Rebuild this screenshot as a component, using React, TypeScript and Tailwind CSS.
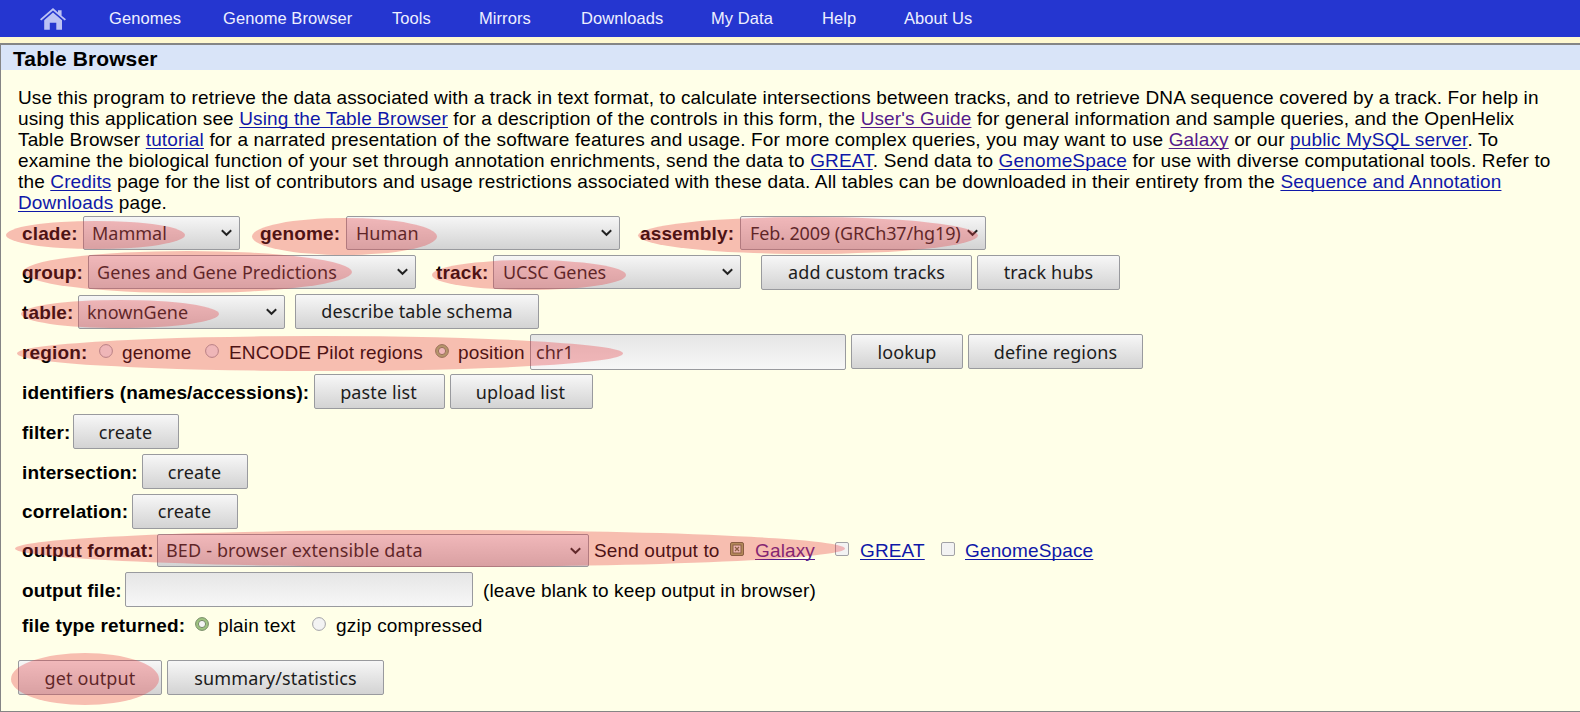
import React from 'react';

const navItems = [
  { label: 'Genomes', width: 'w-[114px]' },
  { label: 'Genome Browser', width: 'w-[169px]' },
  { label: 'Tools', width: 'w-[87px]' },
  { label: 'Mirrors', width: 'w-[102px]' },
  { label: 'Downloads', width: 'w-[130px]' },
  { label: 'My Data', width: 'w-[111px]' },
  { label: 'Help', width: 'w-[82px]' },
  { label: 'About Us', width: 'w-[90px]' }
];

const highlights = [
  'left-[6px] top-[221px] w-[179px] h-[28px]',
  'left-[252px] top-[218px] w-[185px] h-[37px]',
  'left-[638px] top-[217px] w-[340px] h-[37px]',
  'left-[23px] top-[251px] w-[329px] h-[42px]',
  'left-[432px] top-[260px] w-[194px] h-[30px]',
  'left-[21px] top-[300px] w-[198px] h-[28px]',
  'left-[17px] top-[336px] w-[606px] h-[35px]',
  'left-[15px] top-[530px] w-[830px] h-[37px]',
  'left-[11px] top-[653px] w-[148px] h-[52px]'
];

const Row: React.FC<{ className: string; children: React.ReactNode }> = ({ className, children }) => (
  <div className={`flex items-start pl-1 ${className}`}>{children}</div>
);

const Label: React.FC<{ width: string; children: React.ReactNode }> = ({ width, children }) => (
  <span className={`shrink-0 font-bold ${width}`}>{children}</span>
);

const Text: React.FC<{ width: string; children: React.ReactNode }> = ({ width, children }) => (
  <span className={`shrink-0 ${width}`}>{children}</span>
);

const Link: React.FC<{ visited?: boolean; children: React.ReactNode }> = ({ visited, children }) => (
  <a
    href="#"
    className={`underline decoration-1 underline-offset-2 [text-decoration-skip-ink:none] ${visited ? 'text-[#551a8b]' : 'text-[#0f18a8]'}`}
  >
    {children}
  </a>
);

const Select: React.FC<{ className: string; children: React.ReactNode }> = ({ className, children }) => (
  <button
    className={`flex shrink-0 items-center justify-between rounded-[2px] border border-[#999a9e] bg-gradient-to-b from-[#f6f6f6] to-[#d3d3d3] pl-[8px] pr-[7px] text-left font-['Noto_Sans'] text-[18px] text-[#1c1c1c] ${className}`}
  >
    <span>{children}</span>
    <svg className="shrink-0" width="11" height="8" viewBox="0 0 11 8" fill="none" stroke="#222" strokeWidth="1.9">
      <path d="M0.8 1.2 L5.5 5.8 L10.2 1.2" />
    </svg>
  </button>
);

const Button: React.FC<{ className: string; children: React.ReactNode }> = ({ className, children }) => (
  <button
    className={`flex h-[35px] shrink-0 items-center justify-center rounded-[2px] border border-[#999a9e] bg-gradient-to-b from-[#f7f7f7] to-[#d3d3d3] font-['Noto_Sans'] text-[18px] leading-[35px] tracking-[0.12px] text-[#1c1c1c] ${className}`}
  >
    {children}
  </button>
);

const Radio: React.FC<{ className: string; checked?: boolean }> = ({ className, checked }) => (
  <svg className={`shrink-0 ${className}`} width="14" height="14" viewBox="0 0 14 14">
    <circle cx="7" cy="7" r="6.4" fill={checked ? '#9fc480' : '#f3f3f3'} stroke={checked ? '#768a68' : '#a2a2a6'} />
    {checked && <circle cx="7" cy="7" r="3.6" fill="#f4f4f4" stroke="#768a68" />}
  </svg>
);

const Checkbox: React.FC<{ className: string; checked?: boolean }> = ({ className, checked }) => (
  <svg className={`shrink-0 ${className}`} width="14" height="14" viewBox="0 0 14 14">
    <rect x="0.5" y="0.5" width="13" height="13" rx="1.5" fill={checked ? '#9bb067' : '#f3f3f3'} stroke={checked ? '#5f6f45' : '#a2a2a6'} />
    {checked && (
      <>
        <rect x="3" y="3" width="8" height="8" fill="#f0f0e8" stroke="#5f6f45" />
        <path d="M5 5 L9 9 M9 5 L5 9" stroke="#5f6f45" strokeWidth="1.3" />
      </>
    )}
  </svg>
);

const App: React.FC = () => {
  return (
    <div className="relative flex h-[712px] w-[1580px] flex-col overflow-hidden whitespace-nowrap bg-[#fff8d0] font-['Liberation_Sans',sans-serif] text-[19px] text-black">
      <nav className="flex h-[37px] shrink-0 items-center bg-[#2536d0] pl-[40px] text-[16.5px] tracking-[0.07px] text-[#eef0ff]">
        <svg className="mr-[43px]" width="26" height="22" viewBox="0 0 26 22" fill="#bcc2f4">
          <path d="M13 0 L18 4.5 V2.2 H21.6 V7.7 L26 11.2 L24.7 12.4 L13 2.4 L1.3 12.4 L0 11.2 Z" />
          <path d="M13 4.5 L22 12.2 V21.7 H16.3 V14.7 H9.8 V21.7 H4.2 V12.2 Z" />
        </svg>
        {navItems.map((item) => (
          <a key={item.label} href="#" className={`shrink-0 ${item.width}`}>
            {item.label}
          </a>
        ))}
      </nav>

      <main className="mt-[6px] h-[669px] border-b border-l border-t-2 border-[#858585] bg-[#ffffe8] tracking-[0.14px]">
        <h1 className="h-[25px] bg-[#d9e4f8] pl-3 text-[21px] font-bold leading-[27px] tracking-[0.1px]">Table Browser</h1>

        <div className="pl-[17px] pt-[17px]">
          <div className="leading-[21px] tracking-[0.147px]">
            <p className="tracking-[0.128px]">Use this program to retrieve the data associated with a track in text format, to calculate intersections between tracks, and to retrieve DNA sequence covered by a track. For help in</p>
            <p className="tracking-[0.135px]">using this application see <Link>Using the Table Browser</Link> for a description of the controls in this form, the <Link visited>User's Guide</Link> for general information and sample queries, and the OpenHelix</p>
            <p>Table Browser <Link>tutorial</Link> for a narrated presentation of the software features and usage. For more complex queries, you may want to use <Link visited>Galaxy</Link> or our <Link>public MySQL server</Link>. To</p>
            <p>examine the biological function of your set through annotation enrichments, send the data to <Link>GREAT</Link>. Send data to <Link>GenomeSpace</Link> for use with diverse computational tools. Refer to</p>
            <p>the <Link>Credits</Link> page for the list of contributors and usage restrictions associated with these data. All tables can be downloaded in their entirety from the <Link>Sequence and Annotation</Link></p>
            <p><Link>Downloads</Link> page.</p>
          </div>

          <Row className="mt-[3px] h-[39px] leading-[35px]">
            <Label width="w-[61px]">clade:</Label>
            <Select className="mr-[20px] h-[34px] w-[157px] tracking-normal">Mammal</Select>
            <Label width="w-[86px]">genome:</Label>
            <Select className="mr-[20px] h-[34px] w-[274px] pl-[9px] tracking-normal">Human</Select>
            <Label width="w-[100px]">assembly:</Label>
            <Select className="h-[34px] w-[246px] pl-[9px] tracking-[-0.13px]">Feb. 2009 (GRCh37/hg19)</Select>
          </Row>

          <Row className="h-[39px] leading-[35px]">
            <Label width="w-[66px]">group:</Label>
            <Select className="mr-[20px] h-[34px] w-[328px] tracking-[0.06px]">Genes and Gene Predictions</Select>
            <Label width="w-[57px]">track:</Label>
            <Select className="mr-[20px] h-[34px] w-[248px] pl-[9px] tracking-[-0.05px]">UCSC Genes</Select>
            <Button className="mr-[5px] w-[211px]">add custom tracks</Button>
            <Button className="w-[143px]">track hubs</Button>
          </Row>

          <Row className="h-[40px] leading-[37px]">
            <Label width="w-[56px]">table:</Label>
            <Select className="mr-[10px] mt-px h-[34px] w-[207px] tracking-normal">knownGene</Select>
            <Button className="w-[244px]">describe table schema</Button>
          </Row>

          <Row className="h-[40px] leading-[37px]">
            <Label width="w-[77px]">region:</Label>
            <Radio className="mr-[9px] mt-[10px]" />
            <Text width="w-[83px]">genome</Text>
            <Radio className="mr-[10px] mt-[10px]" />
            <Text width="w-[206px]">ENCODE Pilot regions</Text>
            <Radio className="mr-[9px] mt-[10px]" checked />
            <Text width="w-[72px]">position</Text>
            <div className="mr-[5px] flex h-[36px] w-[316px] items-center rounded-[2px] border border-[#999a9e] bg-gradient-to-b from-[#e6e6e6] to-[#f7f7f7] pl-[5px] font-['Noto_Sans'] text-[18px] tracking-normal text-[#1c1c1c]">
              chr1
            </div>
            <Button className="mr-[5px] w-[112px] pt-0.5">lookup</Button>
            <Button className="w-[175px] pt-0.5">define regions</Button>
          </Row>

          <Row className="h-[40px] leading-[37px]">
            <Label width="w-[292px]">identifiers (names/accessions):</Label>
            <Button className="mr-[5px] w-[131px] pr-[2px] pt-0.5">paste list</Button>
            <Button className="w-[143px] pr-[2px] pt-0.5">upload list</Button>
          </Row>

          <Row className="h-[40px] leading-[37px]">
            <Label width="w-[51px]">filter:</Label>
            <Button className="w-[106px] pr-px pt-0.5">create</Button>
          </Row>

          <Row className="h-[40px] leading-[37px]">
            <Label width="w-[120px]">intersection:</Label>
            <Button className="w-[106px] pr-px pt-0.5">create</Button>
          </Row>

          <Row className="h-[40px] leading-[35px]">
            <Label width="w-[110px]">correlation:</Label>
            <Button className="w-[106px] pr-px">create</Button>
          </Row>

          <Row className="h-[38px] leading-[33px]">
            <Label width="w-[135px]">output format:</Label>
            <Select className="mr-[5px] h-[33px] w-[432px] tracking-[0.15px]">BED - browser extensible data</Select>
            <Text width="w-[136px]">Send output to</Text>
            <Checkbox className="mr-[11px] mt-[8px]" checked />
            <Text width="w-[80px]"><Link visited>Galaxy</Link></Text>
            <Checkbox className="mr-[11px] mt-[8px]" />
            <Text width="w-[81px]"><Link>GREAT</Link></Text>
            <Checkbox className="mr-[10px] mt-[8px]" />
            <Text width="w-[134px]"><Link>GenomeSpace</Link></Text>
          </Row>

          <Row className="h-[37px] leading-[37px]">
            <Label width="w-[103px]">output file:</Label>
            <div className="mr-[10px] h-[35px] w-[348px] rounded-[2px] border border-[#999a9e] bg-gradient-to-b from-[#e6e6e6] to-[#f7f7f7]" />
            <Text width="w-[340px]">(leave blank to keep output in browser)</Text>
          </Row>

          <Row className="h-[51px] leading-[33px]">
            <Label width="w-[173px]">file type returned:</Label>
            <Radio className="mr-[9px] mt-[8px]" checked />
            <Text width="w-[94px]">plain text</Text>
            <Radio className="mr-[10px] mt-[8px]" />
            <Text width="w-[150px] tracking-[0.2px]">gzip compressed</Text>
          </Row>

          <div className="flex">
            <Button className="mr-[5px] w-[144px] pt-0.5">get output</Button>
            <Button className="w-[217px] pt-0.5">summary/statistics</Button>
          </div>
        </div>
      </main>

      {/* translucent markers over the settings to fill in */}
      {highlights.map((box) => (
        <div key={box} className={`pointer-events-none absolute rounded-[50%] bg-[#e73a40]/33 ${box}`} />
      ))}
    </div>
  );
};

export default App;
